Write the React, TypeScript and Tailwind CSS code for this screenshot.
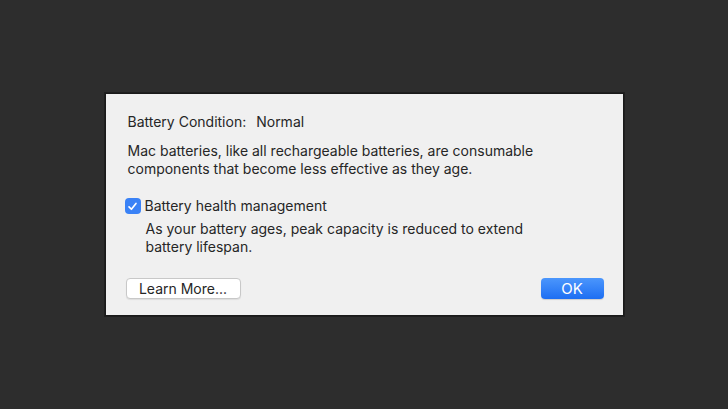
import React from 'react';

export default function App() {
  return (
    <div className="flex h-screen w-full items-center justify-center bg-[#2d2d2d] font-['Inter','Liberation_Sans',Arial,sans-serif] text-[14px] leading-[18px] text-[#262626]">
      <div className="flex h-[223px] w-[519px] flex-col border border-[#1a1a1a] bg-[#f0f0f0] px-[22px] pt-[19px] shadow-[0_0_0_1px_rgba(0,0,0,0.3)]">
        <p>
          Battery Condition:<span className="ml-[10px]">Normal</span>
        </p>
        <p className="mt-[11px]">
          Mac batteries, like all rechargeable batteries, are consumable
          <br />
          components that become less effective as they age.
        </p>

        <label className="ml-[-3px] mt-[19px] flex items-center gap-[4px]">
          <span className="flex h-[16px] w-[16px] items-center justify-center rounded-[4px] bg-[#3a82f6]">
            <svg width="11" height="11" viewBox="0 0 12 12" fill="none">
              <path d="M2.2 6.4 L4.8 9 L9.8 2.6" stroke="white" strokeWidth="1.8" strokeLinecap="round" strokeLinejoin="round" />
            </svg>
          </span>
          Battery health management
        </label>
        <p className="mt-[5px] pl-[18px]">
          As your battery ages, peak capacity is reduced to extend
          <br />
          battery lifespan.
        </p>

        <div className="mt-[22px] flex items-center justify-between">
          <button className="ml-[-2px] h-[21px] w-[115px] rounded-[4px] border border-[#c8c8c8] bg-white text-[14px] leading-[19px] text-[#262626] shadow-[0_1px_1px_rgba(0,0,0,0.08)]">
            Learn More...
          </button>
          <button className="mr-[-3px] h-[21px] w-[63px] rounded-[4px] bg-gradient-to-b from-[#4b96fc] to-[#1c6ef2] text-[15px] leading-[21px] text-white shadow-[0_1px_1px_rgba(0,0,0,0.15)]">
            OK
          </button>
        </div>
      </div>
    </div>
  );
}
